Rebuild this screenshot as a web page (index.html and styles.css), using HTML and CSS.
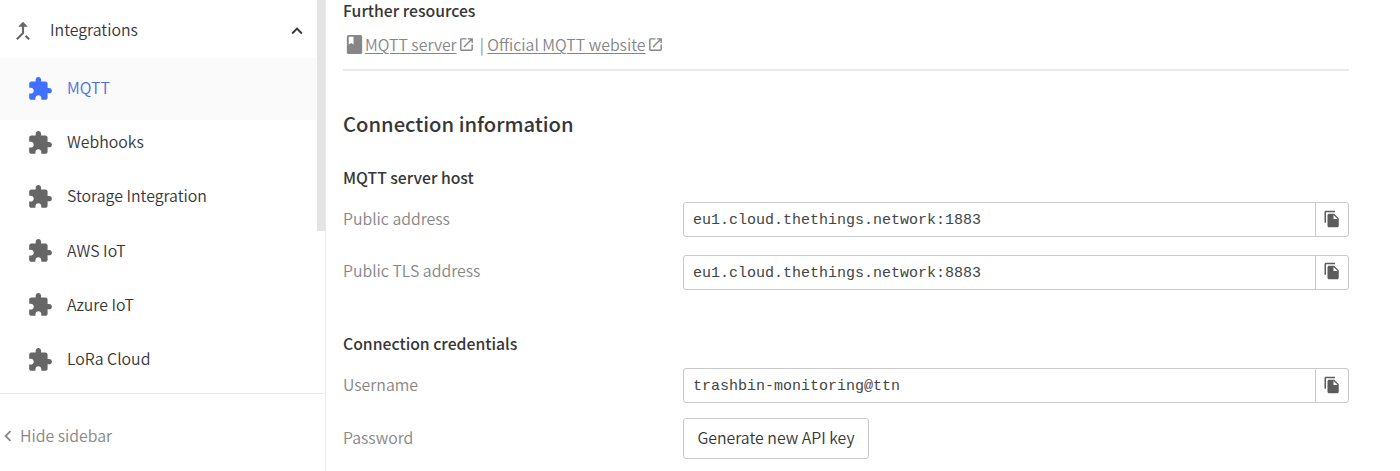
FILE: index.html
```
<!DOCTYPE html>
<html lang="en">
<head>
<meta charset="utf-8">
<title>MQTT integration</title>
<link rel="stylesheet" href="styles.css">
</head>
<body>
<svg class="defs" width="0" height="0">
  <symbol id="puzzle" viewBox="0 0 24 24"><path d="M20.5 11H19V7c0-1.1-.9-2-2-2h-4V3.5C13 2.12 11.88 1 10.5 1S8 2.12 8 3.5V5H4c-1.1 0-1.99.9-1.99 2v3.8H3.5c1.49 0 2.7 1.21 2.7 2.7s-1.21 2.7-2.7 2.7H2V20c0 1.1.9 2 2 2h3.8v-1.5c0-1.49 1.21-2.7 2.7-2.7 1.49 0 2.7 1.21 2.7 2.7V22H17c1.1 0 2-.9 2-2v-4h1.5c1.38 0 2.5-1.12 2.5-2.5S21.88 11 20.5 11z"/></symbol>
  <symbol id="open" viewBox="0 0 24 24"><path d="M19 19H5V5h7V3H5c-1.11 0-2 .9-2 2v14c0 1.1.89 2 2 2h14c1.1 0 2-.9 2-2v-7h-2v7zM14 3v2h3.59l-9.83 9.83 1.41 1.41L19 6.41V10h2V3h-7z"/></symbol>
  <symbol id="copy" viewBox="0 0 24 24"><path d="M16 1H4c-1.1 0-2 .9-2 2v14h2V3h12V1zm-1 4l6 6v10c0 1.1-.9 2-2 2H7.99C6.89 23 6 22.1 6 21l.01-14c0-1.1.89-2 1.99-2h7zm-1 7h5.5L14 6.5V12z"/></symbol>
</svg>
<div class="app">
  <aside class="sidebar">
    <div class="scroll">
      <nav class="nav">
        <div class="group">
          <svg class="merge" viewBox="0 0 24 24"><path d="M17 20.41L18.41 19 15 15.59 13.59 17 17 20.41zM7.5 8H11v5.59L5.59 19 7 20.41l6-6V8h3.5L12 3.5 7.5 8z"/></svg>
          <span class="group-name">Integrations</span>
          <svg class="expand" viewBox="0 0 24 24"><path d="M12 8l-6 6 1.41 1.41L12 10.83l4.59 4.58L18 14z"/></svg>
        </div>
        <div class="item active"><svg class="puzzle"><use href="#puzzle"/></svg><span>MQTT</span></div>
        <div class="item"><svg class="puzzle"><use href="#puzzle"/></svg><span>Webhooks</span></div>
        <div class="item"><svg class="puzzle"><use href="#puzzle"/></svg><span>Storage Integration</span></div>
        <div class="item"><svg class="puzzle"><use href="#puzzle"/></svg><span>AWS IoT</span></div>
        <div class="item"><svg class="puzzle"><use href="#puzzle"/></svg><span>Azure IoT</span></div>
        <div class="item"><svg class="puzzle"><use href="#puzzle"/></svg><span>LoRa Cloud</span></div>
      </nav>
      <div class="thumb"></div>
    </div>
    <div class="hide">
      <svg class="back" viewBox="0 0 24 24"><path d="M15.41 7.41L14 6l-6 6 6 6 1.41-1.41L10.83 12z"/></svg>
      <span>Hide sidebar</span>
    </div>
  </aside>
  <main class="main">
    <h4 class="sub resources">Further resources</h4>
    <div class="links">
      <svg class="book" viewBox="0 0 24 24"><path d="M18 2H6c-1.1 0-2 .9-2 2v16c0 1.1.9 2 2 2h12c1.1 0 2-.9 2-2V4c0-1.1-.9-2-2-2zM6 4h5v8l-2.5-1.5L6 12V4z"/></svg>
      <a class="link">MQTT server</a><svg class="open"><use href="#open"/></svg>
      <span class="bar">|</span>
      <a class="link official">Official MQTT website</a><svg class="open"><use href="#open"/></svg>
    </div>
    <h3 class="title">Connection information</h3>
    <h4 class="sub host">MQTT server host</h4>
    <div class="row">
      <span class="label">Public address</span>
      <div class="field"><span class="value">eu1.cloud.thethings.network:1883</span><span class="copy"><svg class="copy-icon"><use href="#copy"/></svg></span></div>
    </div>
    <div class="row tls">
      <span class="label">Public TLS address</span>
      <div class="field"><span class="value">eu1.cloud.thethings.network:8883</span><span class="copy"><svg class="copy-icon"><use href="#copy"/></svg></span></div>
    </div>
    <h4 class="sub credentials">Connection credentials</h4>
    <div class="row user">
      <span class="label">Username</span>
      <div class="field"><span class="value">trashbin-monitoring@ttn</span><span class="copy"><svg class="copy-icon"><use href="#copy"/></svg></span></div>
    </div>
    <div class="row password">
      <span class="label">Password</span>
      <button class="button">Generate new API key</button>
    </div>
  </main>
</div>
</body>
</html>
```
FILE: styles.css
```
* { box-sizing: border-box; }
body {
  margin: 0;
  height: 471px;
  overflow: hidden;
  background: #fff;
  color: #363636;
  font: 350 15.85px/24px "Noto Sans CJK SC", sans-serif;
}
svg { display: block; flex: none; fill: currentColor; }
.defs { position: absolute; }
.app { display: flex; height: 471px; }

.sidebar {
  width: 326px;
  flex: none;
  display: flex;
  flex-direction: column;
  border-right: 1px solid #eaeaea;
}
.scroll { display: flex; flex: none; height: 394px; border-bottom: 1px solid #eaeaea; }
.nav { width: 317px; }
.thumb { width: 8px; height: 231px; background: #e4e4e4; }
.group { display: flex; align-items: center; height: 58px; padding: 4px 9px 0 10px; }
.group-name { flex: 1; padding: 0 0 2px 14px; }
.merge { width: 26px; height: 26px; color: #666; }
.expand { width: 22px; height: 22px; }
.item { display: flex; align-items: center; gap: 14px; height: 54.25px; padding-left: 27px; }
.item span { padding-bottom: 1px; }
.active { height: 62px; margin-bottom: -4.4px; background: #fafafa; color: #4a6ee0; }
.item.active span { padding-bottom: 3px; }
.puzzle { width: 26px; height: 26px; color: #666; }
.active .puzzle { color: #4070ff; }
.hide { display: flex; align-items: center; flex: none; height: 84px; color: #868686; }
.hide span { padding-bottom: 1px; }
.back { width: 22px; height: 22px; margin-left: -3px; margin-right: 1px; }

.main { width: 1006px; margin-left: 17px; }
.sub { margin: 0; font-size: 15.75px; line-height: 24px; font-weight: 500; }
.resources { margin-top: -1px; }
.links {
  display: flex;
  align-items: center;
  height: 48px;
  padding-bottom: 3px;
  border-bottom: 2px solid #eaeaea;
  color: #868686;
}
.book { width: 23px; height: 23px; margin: 0 -1px 0 -.5px; }
.link {
  margin-left: .5px;
  text-decoration: underline;
  text-decoration-thickness: 1px;
  text-underline-offset: 2px;
}
.open { width: 17px; height: 17px; margin: 0 0 1px 1.5px; }
.bar { margin: 0 3px 0 4.5px; }
.title { margin: 38px 0 0; font-size: 20.2px; line-height: 30px; font-weight: 500; }
.host { margin: 27px 0 12px; }
.row { display: flex; align-items: center; height: 35px; margin-bottom: 18px; }
.label { width: 340px; color: #868686; padding-bottom: 2px; }
.tls .label { padding-bottom: 4px; }
.field { display: flex; width: 666px; height: 35px; border: 1px solid #c9c9c9; border-radius: 3px; }
.value { flex: 1; padding-left: 9px; color: #444; font: 15px/35px "Liberation Mono", monospace; }
.copy {
  display: flex;
  align-items: center;
  justify-content: center;
  width: 33px;
  padding-bottom: 2px;
  border-left: 1px solid #c9c9c9;
  color: #5c5c5c;
}
.copy-icon { width: 18px; height: 18px; }
.tls .copy { padding-bottom: 3px; }
.credentials { margin: 42px 0 12px; }
.user { margin-bottom: 15px; }
.password { height: 41px; }
.button {
  width: 186px;
  height: 41px;
  padding: 0 0 1px;
  border: 1px solid #c9c9c9;
  border-radius: 3px;
  background: #fff;
  color: inherit;
  font: inherit;
}
```
